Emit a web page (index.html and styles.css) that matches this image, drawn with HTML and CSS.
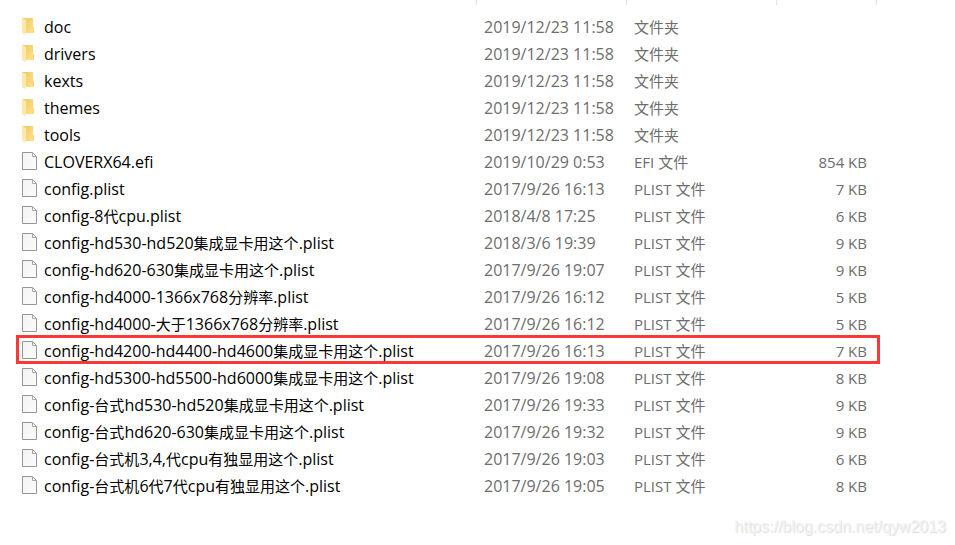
FILE: index.html
```html
<!DOCTYPE html>
<html lang="zh-CN">
<head>
    <meta charset="UTF-8">
    <meta name="viewport" content="width=device-width, initial-scale=1.0">
    <title>CLOVER</title>
    <link rel="stylesheet" href="styles.css">
</head>
<body>
    <!-- Icon shapes shared by all rows -->
    <svg class="sprite" width="0" height="0" aria-hidden="true">
        <defs>
            <linearGradient id="folder-back" x1="0" x2="1" y1="0" y2="1">
                <stop offset="0.200" stop-color="#efcd6c"></stop>
                <stop offset="1" stop-color="#ffe18a"></stop>
            </linearGradient>
            <linearGradient id="page-fill" x1="0" x2="1" y1="0" y2="1">
                <stop offset="0" stop-color="#f1f4f3"></stop>
                <stop offset="1" stop-color="#fbfbfb"></stop>
            </linearGradient>
        </defs>
        <symbol id="folder" viewBox="0 0 15 19">
            <path d="M0 1h11v15H0z" fill="url(#folder-back)"></path>
            <path d="M11 10h1v6h-1z" fill="#f6d478"></path>
            <path d="M0 1l4 2v13l-1 2-3-2z" fill="#ffe9a6"></path>
        </symbol>
        <symbol id="file" viewBox="0 0 15 19">
            <path d="M.5.5h10l4 4v13H.5z" fill="url(#page-fill)" stroke="#959795"></path>
            <path d="M10.500 1v3.500h3.500" fill="#fff" stroke="#a6a8a6"></path>
        </symbol>
    </svg>

    <table class="file-list">
        <colgroup>
            <col>
            <col class="col-date">
            <col class="col-type">
            <col class="col-size">
            <col class="col-end">
        </colgroup>
        <thead>
            <tr>
                <td><span class="divider"></span></td>
                <td><span class="divider"></span></td>
                <td><span class="divider"></span></td>
                <td><span class="divider"></span></td>
                <td></td>
            </tr>
        </thead>
        <tbody>
            <tr>
                <td><div class="name"><svg class="icon"><use href="#folder"></use></svg><span>doc</span></div></td>
                <td>2019/12/23 11:58</td>
                <td class="type">文件夹</td>
                <td class="size"></td>
                <td></td>
            </tr>
            <tr>
                <td><div class="name"><svg class="icon"><use href="#folder"></use></svg><span>drivers</span></div></td>
                <td>2019/12/23 11:58</td>
                <td class="type">文件夹</td>
                <td class="size"></td>
                <td></td>
            </tr>
            <tr>
                <td><div class="name"><svg class="icon"><use href="#folder"></use></svg><span>kexts</span></div></td>
                <td>2019/12/23 11:58</td>
                <td class="type">文件夹</td>
                <td class="size"></td>
                <td></td>
            </tr>
            <tr>
                <td><div class="name"><svg class="icon"><use href="#folder"></use></svg><span>themes</span></div></td>
                <td>2019/12/23 11:58</td>
                <td class="type">文件夹</td>
                <td class="size"></td>
                <td></td>
            </tr>
            <tr>
                <td><div class="name"><svg class="icon"><use href="#folder"></use></svg><span>tools</span></div></td>
                <td>2019/12/23 11:58</td>
                <td class="type">文件夹</td>
                <td class="size"></td>
                <td></td>
            </tr>
            <tr>
                <td><div class="name"><svg class="icon"><use href="#file"></use></svg><span>CLOVERX64.efi</span></div></td>
                <td>2019/10/29 0:53</td>
                <td class="type">EFI 文件</td>
                <td class="size">854 KB</td>
                <td></td>
            </tr>
            <tr>
                <td><div class="name"><svg class="icon"><use href="#file"></use></svg><span>config.plist</span></div></td>
                <td>2017/9/26 16:13</td>
                <td class="type">PLIST 文件</td>
                <td class="size">7 KB</td>
                <td></td>
            </tr>
            <tr>
                <td><div class="name"><svg class="icon"><use href="#file"></use></svg><span>config-8<span class="han">代</span>cpu.plist</span></div></td>
                <td>2018/4/8 17:25</td>
                <td class="type">PLIST 文件</td>
                <td class="size">6 KB</td>
                <td></td>
            </tr>
            <tr>
                <td><div class="name"><svg class="icon"><use href="#file"></use></svg><span>config-hd530-hd520<span class="han">集成显卡用这个</span>.plist</span></div></td>
                <td>2018/3/6 19:39</td>
                <td class="type">PLIST 文件</td>
                <td class="size">9 KB</td>
                <td></td>
            </tr>
            <tr>
                <td><div class="name"><svg class="icon"><use href="#file"></use></svg><span>config-hd620-630<span class="han">集成显卡用这个</span>.plist</span></div></td>
                <td>2017/9/26 19:07</td>
                <td class="type">PLIST 文件</td>
                <td class="size">9 KB</td>
                <td></td>
            </tr>
            <tr>
                <td><div class="name"><svg class="icon"><use href="#file"></use></svg><span>config-hd4000-1366x768<span class="han">分辨率</span>.plist</span></div></td>
                <td>2017/9/26 16:12</td>
                <td class="type">PLIST 文件</td>
                <td class="size">5 KB</td>
                <td></td>
            </tr>
            <tr>
                <td><div class="name"><svg class="icon"><use href="#file"></use></svg><span>config-hd4000-<span class="han">大于</span>1366x768<span class="han">分辨率</span>.plist</span></div></td>
                <td>2017/9/26 16:12</td>
                <td class="type">PLIST 文件</td>
                <td class="size">5 KB</td>
                <td></td>
            </tr>
            <tr class="marked">
                <td><div class="name"><svg class="icon"><use href="#file"></use></svg><span>config-hd4200-hd4400-hd4600<span class="han">集成显卡用这个</span>.plist</span></div></td>
                <td>2017/9/26 16:13</td>
                <td class="type">PLIST 文件</td>
                <td class="size">7 KB</td>
                <td></td>
            </tr>
            <tr>
                <td><div class="name"><svg class="icon"><use href="#file"></use></svg><span>config-hd5300-hd5500-hd6000<span class="han">集成显卡用这个</span>.plist</span></div></td>
                <td>2017/9/26 19:08</td>
                <td class="type">PLIST 文件</td>
                <td class="size">8 KB</td>
                <td></td>
            </tr>
            <tr>
                <td><div class="name"><svg class="icon"><use href="#file"></use></svg><span>config-<span class="han">台式</span>hd530-hd520<span class="han">集成显卡用这个</span>.plist</span></div></td>
                <td>2017/9/26 19:33</td>
                <td class="type">PLIST 文件</td>
                <td class="size">9 KB</td>
                <td></td>
            </tr>
            <tr>
                <td><div class="name"><svg class="icon"><use href="#file"></use></svg><span>config-<span class="han">台式</span>hd620-630<span class="han">集成显卡用这个</span>.plist</span></div></td>
                <td>2017/9/26 19:32</td>
                <td class="type">PLIST 文件</td>
                <td class="size">9 KB</td>
                <td></td>
            </tr>
            <tr>
                <td><div class="name"><svg class="icon"><use href="#file"></use></svg><span>config-<span class="han">台式机</span>3,4,<span class="han">代</span>cpu<span class="han">有独显用这个</span>.plist</span></div></td>
                <td>2017/9/26 19:03</td>
                <td class="type">PLIST 文件</td>
                <td class="size">6 KB</td>
                <td></td>
            </tr>
            <tr>
                <td><div class="name"><svg class="icon"><use href="#file"></use></svg><span>config-<span class="han">台式机</span>6<span class="han">代</span>7<span class="han">代</span>cpu<span class="han">有独显用这个</span>.plist</span></div></td>
                <td>2017/9/26 19:05</td>
                <td class="type">PLIST 文件</td>
                <td class="size">8 KB</td>
                <td></td>
            </tr>
        </tbody>
    </table>

    <div class="watermark">https://blog.csdn.net/qyw2013</div>
</body>
</html>
```
FILE: styles.css
```css
body {
    font-family: "Open Sans", "Noto Sans CJK SC", sans-serif;
    font-size: 16px;
    background-color: #fff;
    color: #6d6d6d;
    margin: 0;
    padding: 0 76px 0 17px;
}

.sprite {
    position: absolute;
}

.file-list {
    width: 100%;
    table-layout: fixed;
    border-collapse: collapse;
}

.col-date,
.col-type {
    width: 150px;
}

.col-size {
    width: 100px;
}

.col-end {
    width: 2px;
}

.file-list td {
    height: 23px;
    padding: 4px 0 0 7px;
    line-height: 23px;
    white-space: nowrap;
}

.file-list td:first-child {
    padding-left: 5px;
}

.file-list td:last-child {
    padding: 0;
}

/* Column dividers at the top of the list */
.file-list thead td,
.file-list thead td:first-child {
    height: 12px;
    padding: 0;
    line-height: 12px;
    vertical-align: top;
}

.divider {
    display: block;
    width: 1px;
    height: 5px;
    margin-left: auto;
    background-color: #e3e3e3;
}

.name {
    display: flex;
    align-items: flex-start;
    gap: 7px;
    height: 23px;
    color: #000;
}

.icon {
    flex: none;
    width: 15px;
    height: 19px;
    margin-top: 1px;
}

/* Chinese characters are set a little smaller than the Latin text */
.han,
.file-list .type,
.file-list .size {
    font-size: 15px;
}

.han {
    line-height: 1;
}

.file-list .size {
    padding-right: 10px;
    text-align: right;
}

.marked {
    outline: 3px solid #fb3838;
    outline-offset: -2px;
}

.watermark {
    position: absolute;
    right: 9px;
    bottom: 8px;
    font-family: "Liberation Sans", Arial, sans-serif;
    font-size: 16px;
    line-height: 20px;
    color: #f2f2f2;
    text-shadow: 1px 1px 1px #dcdcdc;
}
```
